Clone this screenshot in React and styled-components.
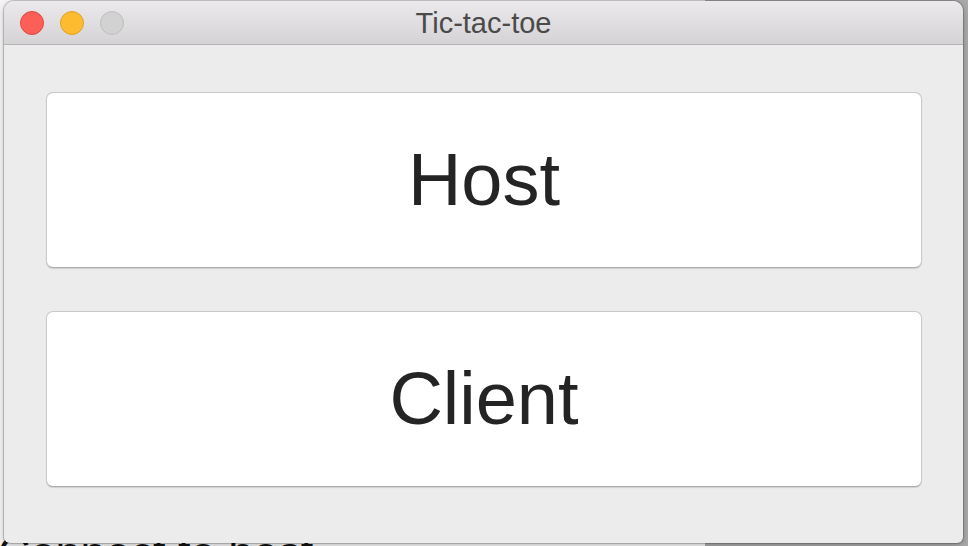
import styled, { createGlobalStyle } from "styled-components";

const GlobalStyle = createGlobalStyle`
  html, body {
    margin: 0;
    padding: 0;
    background: #cbcbcb;
    font-family: "Liberation Sans", Arial, sans-serif;
  }
  #root {
    width: 968px;
    height: 546px;
    overflow: hidden;
  }
`;

const Desktop = styled.div`
  position: relative;
  width: 968px;
  height: 546px;
  overflow: hidden;
  background: linear-gradient(to right, #f4f4f4 0, #f4f4f4 705px, #a9a9a9 705px);
`;

const BehindText = styled.div`
  position: absolute;
  left: -2px;
  top: 530px;
  font-size: 45px;
  line-height: 1;
  color: #111;
  white-space: nowrap;
`;

const Window = styled.div`
  position: relative;
  margin: 1px 0 0 4px;
  width: 959px;
  height: 542px;
  display: flex;
  flex-direction: column;
  background: #ececec;
  border-radius: 10px 10px 6px 6px;
  box-shadow: 0 0 0 1px rgba(0, 0, 0, 0.18), 0 2px 6px rgba(0, 0, 0, 0.25);
  overflow: hidden;
`;

const TitleBar = styled.div`
  position: relative;
  height: 43px;
  flex: none;
  display: flex;
  align-items: center;
  justify-content: center;
  background: linear-gradient(to bottom, #ebe9eb, #d5d3d5);
  border-bottom: 1px solid #b4b4b4;
`;

const Lights = styled.div`
  position: absolute;
  left: 16px;
  top: 10px;
  display: flex;
  gap: 16px;
`;

const Light = styled.span`
  width: 22px;
  height: 22px;
  border-radius: 50%;
  background: ${(p) => p.$fill};
  border: 1px solid ${(p) => p.$edge};
`;

const Title = styled.div`
  font-size: 29px;
  color: #4a4a4a;
  margin-top: 2px;
`;

const Content = styled.div`
  flex: 1;
  display: flex;
  flex-direction: column;
  gap: 43px;
  padding: 47px 41px 56px 42px;
`;

const BigButton = styled.button`
  flex: 1;
  display: flex;
  align-items: center;
  justify-content: center;
  background: #fff;
  border: 1px solid #c9c9c9;
  border-bottom-color: #acacac;
  border-radius: 7px;
  box-shadow: 0 1px 1px rgba(0, 0, 0, 0.12);
  font-family: "Liberation Sans", Arial, sans-serif;
  font-size: 74px;
  color: #242424;
  padding: 0;
  padding-bottom: 2px;
  cursor: pointer;
`;

export default function App() {
  return (
    <>
      <GlobalStyle />
      <Desktop>
        <BehindText>Connect to host</BehindText>
        <Window>
          <TitleBar>
            <Lights>
              <Light $fill="#fc5f57" $edge="#de4841" />
              <Light $fill="#fdbc2f" $edge="#dea123" />
              <Light $fill="#d2d2d2" $edge="#bdbdbd" />
            </Lights>
            <Title>Tic-tac-toe</Title>
          </TitleBar>
          <Content>
            <BigButton>Host</BigButton>
            <BigButton>Client</BigButton>
          </Content>
        </Window>
      </Desktop>
    </>
  );
}
